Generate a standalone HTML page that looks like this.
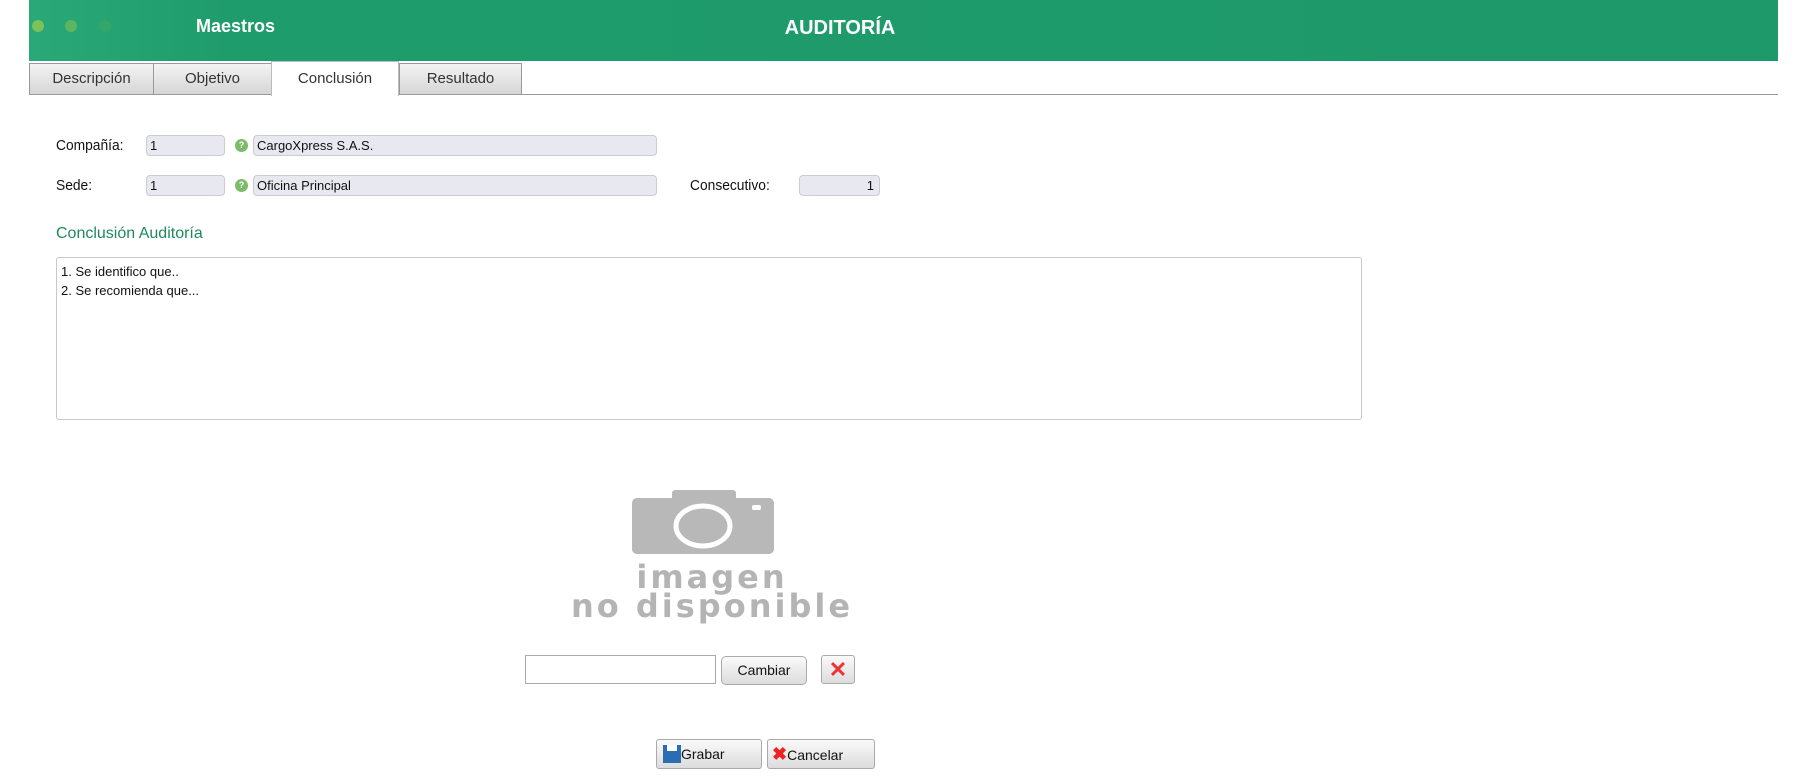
<!DOCTYPE html>
<html><head><meta charset="utf-8"><style>
*{box-sizing:border-box;margin:0;padding:0}
body{width:1798px;height:778px;background:#fff;position:relative;overflow:hidden;font-family:"Liberation Sans",sans-serif;font-size:14px;color:#111}
.a{position:absolute}
.hdr{left:29px;top:0;width:1749px;height:61px;background:linear-gradient(90deg,#2aa878 0,#1f9c6b 200px,#1e9a6a 100%)}
.dot{width:12px;height:12px;border-radius:50%;top:20px}
.tab{top:63px;height:31px;border:1px solid #999;border-bottom:none;background:linear-gradient(#f4f4f4,#d6d6d6);text-align:center;line-height:30px;font-size:15px;color:#333}
.inp{height:21px;border:1px solid #ccc;border-radius:4px;background:#e8e8f0;font-size:13px;line-height:19px;padding-left:3px}
.lbl{font-size:15px;transform:scaleX(.92);transform-origin:left}
.btn{border:1px solid #aaa;border-radius:3px;background:linear-gradient(#fafafa,#dcdcdc);font-size:14px}
</style></head><body>
<div class="a hdr"></div>
<div class="a dot" style="left:32px;background:#7cc25a"></div>
<div class="a dot" style="left:65px;background:#5cb660"></div>
<div class="a dot" style="left:99px;background:#33a668"></div>
<div class="a" style="left:196px;top:16px;color:#fff;font-weight:bold;font-size:18px">Maestros</div>
<div class="a" style="left:740px;width:200px;text-align:center;top:17px;color:#fff;font-weight:bold;font-size:20px">AUDITORÍA</div>
<div class="a" style="left:29px;top:94px;width:1749px;height:1px;background:#999"></div>
<div class="a tab" style="left:29px;width:125px">Descripción</div>
<div class="a tab" style="left:153px;width:119px">Objetivo</div>
<div class="a tab" style="left:271px;top:61px;height:35px;width:128px;background:#fff;border-color:#bbb;line-height:34px">Conclusión</div>
<div class="a tab" style="left:399px;width:123px">Resultado</div>

<div class="a lbl" style="left:56px;top:137px">Compañía:</div>
<div class="a inp" style="left:146px;top:135px;width:79px">1</div>
<div class="a" style="left:235px;top:139px;width:13px;height:13px;border-radius:50%;background:#7dbb6a;color:#fff;font-size:9px;text-align:center;line-height:13px;font-weight:bold">?</div>
<div class="a inp" style="left:253px;top:135px;width:404px">CargoXpress S.A.S.</div>

<div class="a lbl" style="left:56px;top:177px">Sede:</div>
<div class="a inp" style="left:146px;top:175px;width:79px">1</div>
<div class="a" style="left:235px;top:179px;width:13px;height:13px;border-radius:50%;background:#7dbb6a;color:#fff;font-size:9px;text-align:center;line-height:13px;font-weight:bold">?</div>
<div class="a inp" style="left:253px;top:175px;width:404px">Oficina Principal</div>
<div class="a lbl" style="left:690px;top:177px">Consecutivo:</div>
<div class="a inp" style="left:799px;top:175px;width:81px;text-align:right;padding-right:5px">1</div>

<div class="a" style="left:56px;top:225px;color:#1e8a5c;font-size:16px">Conclusión Auditoría</div>
<div class="a" style="left:56px;top:257px;width:1306px;height:163px;border:1px solid #c8c8c8;border-radius:3px;padding:4px 4px;font-size:13px;line-height:19px">1. Se identifico que..<br>2. Se recomienda que...</div>

<div class="a" style="left:632px;top:490px;width:142px;height:64px">
<svg width="142" height="64" viewBox="0 0 142 64"><rect x="40" y="0" width="64" height="10" rx="3" fill="#b8b8b8"/><rect x="0" y="8" width="142" height="56" rx="5" fill="#b8b8b8"/><ellipse cx="71" cy="36" rx="27" ry="20" fill="none" stroke="#fff" stroke-width="5"/><rect x="120" y="15" width="9" height="5" rx="2" fill="#fff"/></svg></div>
<div class="a" style="left:550px;top:563px;width:324px;text-align:center;color:#b4b4b4;font-weight:bold;font-size:32px;line-height:29px;letter-spacing:3px;font-family:'DejaVu Sans',sans-serif">imagen<br>no disponible</div>

<div class="a" style="left:525px;top:655px;width:191px;height:29px;border:1px solid #aaa"></div>
<div class="a btn" style="left:721px;top:656px;width:86px;height:29px;border-radius:5px;text-align:center;line-height:27px">Cambiar</div>
<div class="a btn" style="left:821px;top:655px;width:34px;height:29px;text-align:center;line-height:27px;color:#e33;font-size:22px;font-weight:bold">✕</div>

<div class="a btn" style="left:656px;top:739px;width:106px;height:30px;line-height:28px;padding-left:6px"><span style="display:inline-block;width:18px;height:18px;background:#2a6db5;vertical-align:-4px;position:relative"><span style="position:absolute;left:4px;top:0;width:10px;height:6px;background:#fff"></span></span>Grabar</div>
<div class="a btn" style="left:767px;top:739px;width:108px;height:30px;line-height:28px;padding-left:4px"><span style="color:#e22;font-weight:bold;font-size:18px">✖</span>Cancelar</div>
</body></html>
